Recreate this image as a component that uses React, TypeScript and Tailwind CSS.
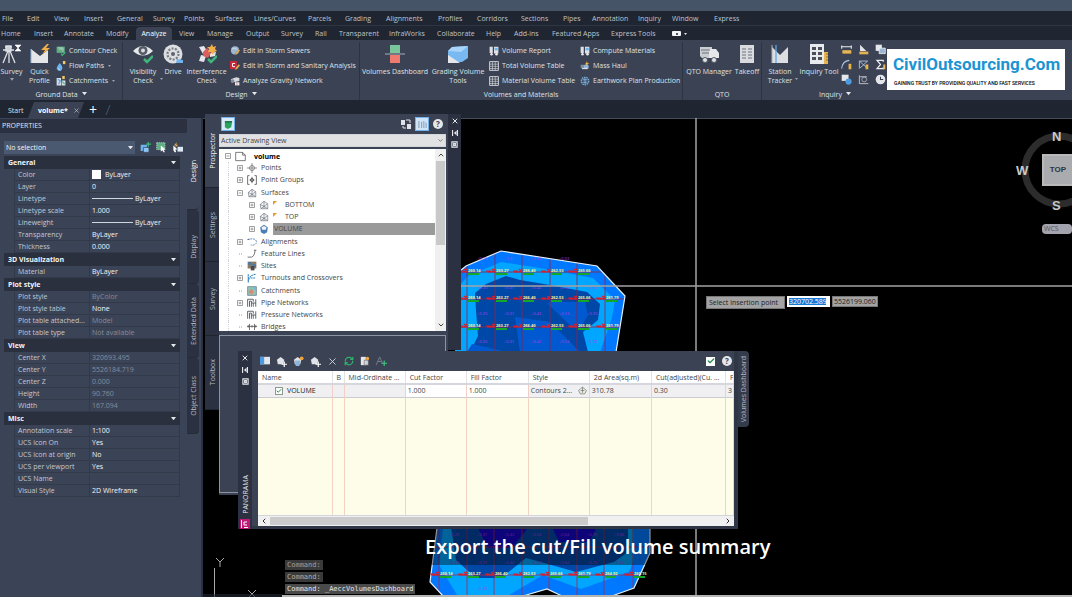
import React, { useState } from 'react';
import { Check, ChevronDown, ChevronUp, ChevronLeft, ChevronRight, X, RefreshCw } from 'lucide-react';

const menus = [
  { label: 'File', w: 'w-[25px]' },
  { label: 'Edit', w: 'w-[27px]' },
  { label: 'View', w: 'w-[30px]' },
  { label: 'Insert', w: 'w-[33px]' },
  { label: 'General', w: 'w-9' },
  { label: 'Survey', w: 'w-[31px]' },
  { label: 'Points', w: 'w-[31px]' },
  { label: 'Surfaces', w: 'w-[39px]' },
  { label: 'Lines/Curves', w: 'w-[54px]' },
  { label: 'Parcels', w: 'w-[37px]' },
  { label: 'Grading', w: 'w-[41px]' },
  { label: 'Alignments', w: 'w-[52px]' },
  { label: 'Profiles', w: 'w-[39px]' },
  { label: 'Corridors', w: 'w-11' },
  { label: 'Sections', w: 'w-[42px]' },
  { label: 'Pipes', w: 'w-[29px]' },
  { label: 'Annotation', w: 'w-[46px]' },
  { label: 'Inquiry', w: 'w-[34px]' },
  { label: 'Window', w: 'w-[42px]' },
  { label: 'Express', w: 'w-10' },
];

const ribbonTabs = [
  { label: 'Home', w: 'w-[33px]' },
  { label: 'Insert', w: 'w-[30px]' },
  { label: 'Annotate', w: 'w-[42px]' },
  { label: 'Modify', w: 'w-[30px]' },
  { label: 'Analyze', w: 'w-9' },
  { label: 'View', w: 'w-[35px]' },
  { label: 'Manage', w: 'w-[39px]' },
  { label: 'Output', w: 'w-[35px]' },
  { label: 'Survey', w: 'w-[34px]' },
  { label: 'Rail', w: 'w-6' },
  { label: 'Transparent', w: 'w-[50px]' },
  { label: 'InfraWorks', w: 'w-12' },
  { label: 'Collaborate', w: 'w-[49px]' },
  { label: 'Help', w: 'w-7' },
  { label: 'Add-ins', w: 'w-[38px]' },
  { label: 'Featured Apps', w: 'w-[59px]' },
  { label: 'Express Tools', w: 'w-[61px]' },
];

type Prop = { name: string; value: string; dim?: boolean; kind?: 'color' | 'line' };

const sections: { title: string; rows: Prop[] }[] = [
  {
    title: 'General',
    rows: [
      { name: 'Color', value: 'ByLayer', kind: 'color' },
      { name: 'Layer', value: '0' },
      { name: 'Linetype', value: 'ByLayer', kind: 'line' },
      { name: 'Linetype scale', value: '1.000' },
      { name: 'Lineweight', value: 'ByLayer', kind: 'line' },
      { name: 'Transparency', value: 'ByLayer' },
      { name: 'Thickness', value: '0.000' },
    ],
  },
  { title: '3D Visualization', rows: [{ name: 'Material', value: 'ByLayer' }] },
  {
    title: 'Plot style',
    rows: [
      { name: 'Plot style', value: 'ByColor', dim: true },
      { name: 'Plot style table', value: 'None' },
      { name: 'Plot table attached...', value: 'Model', dim: true },
      { name: 'Plot table type', value: 'Not available', dim: true },
    ],
  },
  {
    title: 'View',
    rows: [
      { name: 'Center X', value: '320693.495', dim: true },
      { name: 'Center Y', value: '5526184.719', dim: true },
      { name: 'Center Z', value: '0.000', dim: true },
      { name: 'Height', value: '90.760', dim: true },
      { name: 'Width', value: '167.094', dim: true },
    ],
  },
  {
    title: 'Misc',
    rows: [
      { name: 'Annotation scale', value: '1:100' },
      { name: 'UCS icon On', value: 'Yes' },
      { name: 'UCS icon at origin', value: 'No' },
      { name: 'UCS per viewport', value: 'Yes' },
      { name: 'UCS Name', value: '' },
      { name: 'Visual Style', value: '2D Wireframe' },
    ],
  },
];

// Small filled triangle used by every drop-down
const Caret = ({ className = 'w-[5px] text-gray-200' }) => (
  <svg viewBox="0 0 6 4" className={className} fill="currentColor"><path d="M0 0h6L3 4z" /></svg>
);

const Pencil = () => <path d="M9 11l5-6 2 2-5 6-3 1z" fill="#e5b45c" stroke="#7a5a2c" strokeWidth=".5" />;

// Large ribbon icons, 20x20 grid
const Big = {
  survey: (
    <g fill="none" stroke="#dfe2e6" strokeWidth="1.3">
      <path d="M3 3h7M1 6h11M6 7L1 19M7 7v12M8 7l5 12" /><path d="M4 2h5v5H4z" fill="#cfd3d8" />
      <path d="M13 1h6l-6 6h6z" fill="#fff" stroke="#fff" strokeWidth=".6" />
    </g>
  ),
  profile: (
    <g><path d="M1 5l9 7 8-6v13H1z" fill="#e4e6ea" /><path d="M1 5v14" stroke="#8fb4dc" strokeWidth="1" /><path d="M17 0l-6 6h4l-3 5 8-7h-4l3-4z" fill="#f2b04a" /></g>
  ),
  eye: (
    <g><path d="M0 7Q10-3 20 7 10 16 0 7z" fill="#e7e8ea" /><circle cx="10" cy="6.500" r="4.500" fill="#555b66" /><circle cx="10" cy="6.500" r="2" fill="#d9dbde" /><path d="M11 15l3 3 6-6" fill="none" stroke="#3fb57b" strokeWidth="2.500" /></g>
  ),
  drive: (
    <g><circle cx="10" cy="10" r="9.500" fill="#dcdee1" /><circle cx="10" cy="10" r="5.500" fill="none" stroke="#767b84" strokeWidth="2.200" strokeDasharray="2 1.400" /><circle cx="10" cy="10" r="2" fill="#5e636d" /><path d="M14 15l6 1v3h-7z" fill="#6fb2ee" /></g>
  ),
  interference: (
    <g><path d="M2 3l5-1 3 5-4 3zM2 17l2-6 5 1-2 6zM13 9l6-1-1 4-5 1z" fill="#e6e7ea" /><path d="M6 8l4-4 4 5-3 5-5-2z" fill="#d9605c" /><path d="M15 0l1 3 3-1-1 3 2 2-3 1-1 3-2-3-3 0 1-3-2-2 3 0z" fill="#f2b04a" /><path d="M11 15l3 3 6-6" fill="none" stroke="#3fb57b" strokeWidth="2.500" /></g>
  ),
  dashboard: (
    <g><path d="M5 1h10v8H5z" fill="#79c79b" /><path d="M5 11h10v8H5z" fill="#ee7a70" /><path d="M0 10h20" stroke="#a9adb5" strokeWidth="1" /></g>
  ),
  grading: (
    <g><path d="M0 7l4-4 16-1v12l-6 4H0z" fill="#78b9f2" /><path d="M0 7l13 1 7-6L4 3z" fill="#a8d4fa" /><path d="M0 11v8h12z" fill="#e4e6ea" /></g>
  ),
  truck: (
    <g><path d="M1 3h12v11H3L1 12z" fill="#c9ccd1" /><path d="M10 5h7l3 4v5H10z" fill="#e6e7ea" /><path d="M2 6h9M3 9h7" stroke="#6c727d" strokeWidth="1" /><circle cx="6" cy="16" r="2.500" fill="#e3e5e8" stroke="#555b66" /><circle cx="15" cy="16" r="2.500" fill="#e3e5e8" stroke="#555b66" /></g>
  ),
  takeoff: (
    <g><path d="M3 1h14v18H3z" fill="#d9dbde" /><path d="M5 5h4M11 5h4M5 8h4M11 8h4M5 11h4M11 11h4M5 14h4M11 14h4" stroke="#6d737e" strokeWidth="1" /></g>
  ),
  station: (
    <g><path d="M2 3l8 8 8-8v16H2z" fill="#dcdee2" /><path d="M6 1v18" stroke="#5da7e8" strokeWidth="1.300" /><path d="M2 1v18" stroke="#aab0ba" /></g>
  ),
  inquiry: (
    <g><path d="M1 0h14v20H1z" fill="#e9eaec" /><path d="M3 3h4v3H3zM9 3h4v3H9zM3 8h4v3H3zM9 8h4v3H9zM3 13h4v3H3zM9 13h4v3H9z" fill="#4a505c" /><path d="M15 8h4v12h-4z" fill="#e6b450" /><path d="M17 10h2M17 13h2M17 16h2" stroke="#7a5a2c" strokeWidth=".8" /></g>
  ),
};

// Small ribbon icons, 16x16 grid
const Small = {
  contour: <g><path d="M1 1h13v10H1z" fill="#5fae84" /><path d="M3 3h8v6M5 5h5" stroke="#cfe8da" fill="none" /><path d="M8 12l2 3 5-5" stroke="#3fb57b" strokeWidth="2" fill="none" /></g>,
  flow: <g><path d="M6 3q5 6 4 9-1 4-4 4t-5-4q0-3 5-9z" fill="#6ab4ef" /><path d="M4 12q0 2 2 2" stroke="#fff" fill="none" /><path d="M11 0h4v5h-4z" fill="#f2c661" /></g>,
  catch: <g><path d="M1 3h7v12H1zM9 7h6v8H9z" fill="#d9dce0" /><path d="M3 5l4 3-3 5" stroke="#5da7e8" strokeWidth="2" fill="none" /><path d="M10 0h4v5h-4z" fill="#f2c661" /><path d="M10 9l4 4" stroke="#5fae84" strokeWidth="2" /></g>,
  storm: <g><circle cx="8" cy="7" r="6.500" fill="#9db6d2" /><path d="M3 5q5-4 9 1" stroke="#e7f0fa" fill="none" /><Pencil /></g>,
  sanitary: <g><path d="M0 0h11v13H0z" fill="#c9283b" /><path d="M8 4H4v5h4" stroke="#fff" strokeWidth="1.500" fill="none" /><Pencil /></g>,
  gravity: <g><path d="M1 5l9-3 5 1v5L6 10z" fill="#d7dadf" /><circle cx="4" cy="8" r="3" fill="#878d98" /><path d="M8 10h7v5H8z" fill="#eceef0" /><path d="M11 10v5" stroke="#d9605c" /></g>,
  report: <g><path d="M1 1h5v10H1zM8 1h7v11H8z" fill="#dfe1e5" /><path d="M9 3h5v4H9z" fill="#6ab4ef" /><circle cx="4" cy="13" r="2" fill="#eee" /><circle cx="12" cy="13" r="2" fill="#eee" /></g>,
  table: <g><path d="M1 1h14v14H1z" fill="#3a404c" stroke="#e4e6ea" strokeWidth="1.400" /><path d="M1 5h14M1 8.500h14M1 12h14M5.500 1v14M10 1v14" stroke="#d9dce0" strokeWidth="1" /></g>,
  mass: <g><path d="M1 6h6v5H1z" fill="#7d8da3" /><circle cx="10" cy="9" r="4" fill="#8cb6dc" /><path d="M11 0l1 3 3 1-3 1-1 3-1-3-2-1 2-1z" fill="#f2b04a" /><path d="M3 12h9" stroke="#dfe1e5" strokeWidth="2" /></g>,
  earth: <g><circle cx="8" cy="8" r="6" fill="#35506e" stroke="#79aede" strokeWidth="2" strokeDasharray="2.500 1.200" /><path d="M4 6h8M4 10h8M8 3v10" stroke="#b6d3ee" /></g>,
  ruler: <g><path d="M1 2v5M15 2v5M1 4h14" stroke="#eee" strokeWidth="1.500" /><path d="M2 9h13v5H2z" fill="#e6b450" /></g>,
  area: <g><path d="M3 1l9 9H3z" fill="#e4e6ea" /><path d="M2 11h13v4H2z" fill="#e6b450" /></g>,
  layers: <g><path d="M1 1h9v9H1z" fill="#e4e6ea" /><path d="M6 6h9v8H6z" fill="#9db6d2" stroke="#fff" /></g>,
  curve: <g><path d="M1 14Q2 3 12 2" stroke="#a9c9ea" strokeWidth="1.500" fill="none" /><path d="M11 7h4v8h-4z" fill="#e6b450" /></g>,
  net: <g><path d="M2 14V3l10 9M2 3h12L3 13" stroke="#b9d0e8" strokeWidth="1.200" fill="none" /><path d="M11 8h4v7h-4z" fill="#e6b450" /></g>,
  sum: <g><path d="M12 4V2H3l5 6-5 6h9v-2" stroke="#eee" strokeWidth="1.800" fill="none" /><path d="M12 8h3v7h-3z" fill="#e6b450" /></g>,
  select: <g><path d="M1 1h10v9H1z" fill="#e4e6ea" /><circle cx="11" cy="11" r="4.500" fill="#4f9be0" /></g>,
  zoom: <g><path d="M2 2v12h13M3 4h10" stroke="#c7cbd1" strokeWidth="1.300" fill="none" /><circle cx="9" cy="8" r="3.500" stroke="#c7cbd1" fill="none" /></g>,
  clock: <g><circle cx="8" cy="8" r="7" fill="#e4e6ea" /><path d="M8 4v4h4" stroke="#3b4252" strokeWidth="1.500" fill="none" /></g>,
};

const BigButton = ({ icon, lines, w, drop = false }: { icon: keyof typeof Big; lines: string[]; w: string; drop?: boolean }) => (
  <button className={`relative flex shrink-0 flex-col items-center whitespace-nowrap ${w}`}>
    <svg viewBox="0 0 20 20" className="mb-[3px] size-5">{Big[icon]}</svg>
    {lines.map((line) => <span key={line} className="leading-[9px]">{line}</span>)}
    {drop && lines.length === 1 && <Caret className="mt-[2px] w-1 text-gray-400" />}
    {drop && lines.length === 2 && <Caret className="absolute bottom-[5px] right-0 w-[3px] text-gray-400" />}
  </button>
);

const SmallButton = ({ icon, label, drop = false }: { icon: keyof typeof Small; label: string; drop?: boolean }) => (
  <button className="flex h-[15px] items-center gap-[3px] whitespace-nowrap">
    <svg viewBox="0 0 16 16" className="size-[10px]">{Small[icon]}</svg>
    {label}
    {drop && <Caret className="ml-px w-[3px] text-gray-400" />}
  </button>
);

const Group = ({ title, w, drop = false, children }: { title: string; w: string; drop?: boolean; children: React.ReactNode }) => (
  <section className={`flex shrink-0 flex-col border-r border-[#2c3341] last-of-type:border-r-0 ${w}`}>
    <div className="flex h-[46px] items-start pt-[2px]">{children}</div>
    <div className="flex h-3 items-center justify-center gap-1">{title}{drop && <Caret />}</div>
  </section>
);

const Ribbon = () => (
  <div className="relative flex h-[60px] shrink-0 bg-[#3b4254] pt-[2px]">
    <Group title="Ground Data" w="w-[123px]" drop>
      <BigButton icon="survey" lines={['Survey']} w="w-[23px]" drop />
      <BigButton icon="profile" lines={['Quick', 'Profile']} w="w-[33px]" />
      <div className="-mt-px">
        <SmallButton icon="contour" label="Contour Check" />
        <SmallButton icon="flow" label="Flow Paths" drop />
        <SmallButton icon="catch" label="Catchments" drop />
      </div>
    </Group>
    <Group title="Design" w="w-[237px]" drop>
      <BigButton icon="eye" lines={['Visibility', 'Check']} w="w-[40px]" drop />
      <BigButton icon="drive" lines={['Drive']} w="w-5" />
      <BigButton icon="interference" lines={['Interference', 'Check']} w="w-[47px]" />
      <div className="-mt-px">
        <SmallButton icon="storm" label="Edit in Storm Sewers" />
        <SmallButton icon="sanitary" label="Edit in Storm and Sanitary Analysis" />
        <SmallButton icon="gravity" label="Analyze Gravity Network" />
      </div>
    </Group>
    <Group title="Volumes and Materials" w="w-[323px]">
      <BigButton icon="dashboard" lines={['Volumes Dashboard']} w="w-[70px]" />
      <BigButton icon="grading" lines={['Grading Volume', 'Tools']} w="w-[56px]" />
      <div className="-mt-px ml-[3px] w-[91px]">
        <SmallButton icon="report" label="Volume Report" />
        <SmallButton icon="table" label="Total Volume Table" />
        <SmallButton icon="table" label="Material Volume Table" />
      </div>
      <div className="-mt-px">
        <SmallButton icon="report" label="Compute Materials" />
        <SmallButton icon="mass" label="Mass Haul" />
        <SmallButton icon="earth" label="Earthwork Plan Production" />
      </div>
    </Group>
    <Group title="QTO" w="w-[79px]">
      <BigButton icon="truck" lines={['QTO Manager']} w="w-[52px]" />
      <BigButton icon="takeoff" lines={['Takeoff']} w="w-6" />
    </Group>
    <Group title="Inquiry" w="w-[146px]" drop>
      <BigButton icon="station" lines={['Station', 'Tracker']} w="w-[36px]" drop />
      <BigButton icon="inquiry" lines={['Inquiry Tool']} w="w-[42px]" />
      <div className="grid grid-cols-3 gap-x-[6px] gap-y-1 pl-px">
        {(['ruler', 'area', 'layers', 'curve', 'net', 'sum', 'select', 'zoom', 'clock'] as const).map((name) => (
          <button key={name} aria-label={name}><svg viewBox="0 0 16 16" className="size-[11px]">{Small[name]}</svg></button>
        ))}
      </div>
    </Group>
    <div className="absolute right-[7px] top-[9px] flex h-[41px] w-[178px] flex-col bg-white pl-[6px] font-['Roboto','Liberation_Sans',sans-serif] whitespace-nowrap">
      <span className="text-[17px] leading-[30px] font-bold text-[#1c94d2]">CivilOutsourcing.Com</span>
      <span className="pl-px text-[5px] leading-[9px] font-medium text-black">GAINING TRUST BY PROVIDING QUALITY AND FAST SERVICES</span>
    </div>
  </div>
);

const Properties = () => (
  <aside className="flex w-[203px] shrink-0 border-r-2 border-[#2b3140] bg-[#3b4356]">
    <div className="flex w-[187px] flex-col">
      <h2 className="mt-px h-[14px] bg-[#2b3140] pl-[2px] leading-[14px] text-gray-200">PROPERTIES</h2>
      <div className="mt-2 mb-px flex items-center gap-[5px] pb-px pl-1">
        <label className="relative w-[131px]">
          <select aria-label="Selection" className="h-[13px] w-full appearance-none bg-[#4b5970] pl-[2px] text-gray-100">
            <option>No selection</option>
          </select>
          <Caret className="absolute right-[2px] top-[5px] w-[5px] text-gray-200" />
        </label>
        <button aria-label="Toggle pickadd"><svg viewBox="0 0 16 16" className="size-[11px]"><path d="M1 4h9v9H1z" fill="#6ab4ef" /><path d="M5 8h8v7H5z" fill="#8cc5f5" stroke="#3b4356" /><path d="M12 0v7M9 3h7" stroke="#3fb57b" strokeWidth="2" /></svg></button>
        <button aria-label="Select objects"><svg viewBox="0 0 16 16" className="size-[11px]"><path d="M1 1h12v10H1z" fill="#5fae84" strokeDasharray="2 1" stroke="#bfe3cf" /><path d="M7 5l7 6-3 0 2 4-2 0-2-3-2 2z" fill="#fff" /></svg></button>
        <button aria-label="Quick select"><svg viewBox="0 0 16 16" className="size-[11px]"><path d="M2 5l6 6-3 0 1 4-2 0-2-3z" fill="#fff" /><path d="M7 0L3 5h3l-2 4 5-5H6z" fill="#f2b04a" /><path d="M8 7h8v7H8z" fill="#dbe9f7" /></svg></button>
      </div>
      {sections.map((section) => (
        <div key={section.title} className="mr-[7px] pl-1">
          <div className="flex h-[13px] items-center justify-between bg-[#2a303e] px-1 font-bold text-gray-100">
            {section.title}
            <Caret />
          </div>
          <dl className="ml-[10px] border-l border-[#323949]">
            {section.rows.map((row) => (
              <div key={row.name} className="flex h-3 items-center border-b border-r border-[#323949]">
                <dt className="h-full w-[75px] shrink-0 border-r border-[#323949] pl-[3px] leading-[11px] text-[#c3c9d3]">{row.name}</dt>
                <dd className={`flex items-center pl-[2px] leading-[11px] ${row.dim ? 'text-[#858d9c]' : 'text-gray-100'}`}>
                  {row.kind === 'color' && <span className="mr-1 size-[9px] bg-white" />}
                  {row.kind === 'line' && <span className="mr-[2px] h-px w-[41px] bg-gray-300" />}
                  {row.value}
                </dd>
              </div>
            ))}
          </dl>
        </div>
      ))}
    </div>
    <div className="mt-4 flex w-3 flex-col text-[#b4bac5]">
      {[
        { label: 'Design', cls: 'h-[76px] bg-[#3b4356] text-gray-100' },
        { label: 'Display', cls: 'h-[74px] bg-[#2b3140]' },
        { label: 'Extended Data', cls: 'h-[74px] bg-[#2b3140]' },
        { label: 'Object Class', cls: 'h-[76px] bg-[#2b3140]' },
      ].map((tab) => (
        <button key={tab.label} className={`flex items-center justify-center whitespace-nowrap rounded-r-sm border-b border-[#252b37] ${tab.cls}`}>
          <span className="rotate-180 leading-[9px] [writing-mode:vertical-rl]">{tab.label}</span>
        </button>
      ))}
    </div>
  </aside>
);

// Tree icons, 16x16 grid
const surfaceIcon = <path d="M2 7l6-5 6 4v8H3zM2 7l6 3 6-4M8 10v4M8 2v8M3 14l5-4 6 4" fill="#eef0f2" stroke="#5d646f" strokeWidth=".9" />;
const pipeIcon = <path d="M1 14V2h9v4M4 14V5h3v9M10 14V8M14 2v12M7 8h7" fill="none" stroke="#4d535d" strokeWidth="1.400" />;
const TreeIcon: Record<string, React.ReactNode> = {
  doc: <path d="M1 2h10l4 4v8H1zM11 2v4h4" fill="#fff" stroke="#444" />,
  points: <g fill="none" stroke="#555"><circle cx="8" cy="8" r="4" /><path d="M8 0v16M0 8h16" /></g>,
  groups: <g fill="none" stroke="#444" strokeWidth="1.200"><path d="M4 1H1v14h3M12 1h3v14h-3M8 3v10M4 8h8" /><circle cx="8" cy="8" r="2.500" /></g>,
  surface: surfaceIcon,
  volume: <g><path d="M2 5l6-4 6 4-1 8-5 3-5-3z" fill="#4b7fb5" /><path d="M4 5l4-2 4 2-1 4H5z" fill="#eef3f8" /></g>,
  align: <path d="M1 4l4-1 5 0q5 1 5 5t-5 5H6M1 4h3" fill="none" stroke="#3d6e9e" strokeWidth="1.300" strokeDasharray="3 1.500" />,
  feature: <path d="M1 13h6q5-1 6-11M11 2h4" fill="none" stroke="#555" strokeWidth="1.300" />,
  sites: <g><path d="M1 1h14v11H1z" fill="#8a7a5f" /><path d="M2 2h5v4H2zM9 5h5v4H9z" fill="#3f78b8" /><path d="M6 8h6v7H6z" fill="#4a4a4a" /></g>,
  turnout: <path d="M2 15Q2 4 14 2M2 2v13M6 8l7 0" fill="none" stroke="#2f83c4" strokeWidth="1.800" strokeDasharray="3 1" />,
  catchments: <g><path d="M1 1h14v14H1z" fill="#8fc5b8" stroke="#567" /><path d="M2 10l5-6 4 5-3 5z" fill="#d98a72" /><path d="M9 2h5v5z" fill="#6ab4ef" /></g>,
  pipe: pipeIcon,
  bridge: <path d="M0 7h16M4 3v10M12 3v10M2 5v4M14 5v4M8 5v4" fill="none" stroke="#555" strokeWidth="1.300" />,
};

const tree = [
  { label: 'Points', icon: 'points', level: 1, box: '+' },
  { label: 'Point Groups', icon: 'groups', level: 1, box: '+' },
  { label: 'Surfaces', icon: 'surface', level: 1, box: '-' },
  { label: 'BOTTOM', icon: 'surface', level: 2, box: '+', flag: true },
  { label: 'TOP', icon: 'surface', level: 2, box: '+', flag: true },
  { label: 'VOLUME', icon: 'volume', level: 2, box: '+', active: true },
  { label: 'Alignments', icon: 'align', level: 1, box: '+' },
  { label: 'Feature Lines', icon: 'feature', level: 1 },
  { label: 'Sites', icon: 'sites', level: 1 },
  { label: 'Turnouts and Crossovers', icon: 'turnout', level: 1, box: '+' },
  { label: 'Catchments', icon: 'catchments', level: 1 },
  { label: 'Pipe Networks', icon: 'pipe', level: 1, box: '+' },
  { label: 'Pressure Networks', icon: 'pipe', level: 1 },
  { label: 'Bridges', icon: 'bridge', level: 1 },
];

const Expander = ({ box }: { box?: string }) => (
  <svg viewBox="0 0 6 6" className="size-[6px] shrink-0" fill="none" stroke="#888" strokeWidth=".8">
    {box ? <><path d="M.5 .5h5v5h-5zM1.500 3h3" />{box === '+' && <path d="M3 1.500v3" />}</> : <path d="M2 3h4" strokeDasharray="1 1" />}
  </svg>
);

const PaletteControls = () => (
  <>
    <button aria-label="Close"><X className="size-2" strokeWidth={3} /></button>
    <button aria-label="Auto-hide"><svg viewBox="0 0 8 8" className="size-[6px]" fill="currentColor"><path d="M0 0h1.500v8H0zM6.500 0H8v8H6.500zM6 1v6L2.500 4z" /></svg></button>
    <button aria-label="Settings"><svg viewBox="0 0 8 8" className="size-[7px]"><path d="M1 1h6v6H1zM3 3h2v2H3z" fill="none" stroke="currentColor" strokeWidth="1.300" /></svg></button>
  </>
);

const HelpButton = () => (
  <button aria-label="Help" className="flex size-[10px] items-center justify-center rounded-full bg-gray-200 text-[8px] leading-none font-bold text-[#3b4254]">?</button>
);

const Toolspace = () => {
  const [tab, setTab] = useState('Prospector');
  return (
    <section className="absolute -top-1 left-[2px] flex h-[381px] w-[256px] text-[#444]">
      <div className="flex w-[14px] flex-col text-[#b4bac5]">
        {['Prospector', 'Settings', 'Survey', 'Toolbox'].map((name) => (
          <button key={name} onClick={() => setTab(name)} className={`flex h-[74px] items-center justify-center border-b border-[#1f2530] ${tab === name ? 'bg-[#3b4254] text-gray-100' : 'bg-[#2b3140]'}`}>
            <span className="rotate-180 leading-[9px] [writing-mode:vertical-rl]">{name}</span>
          </button>
        ))}
      </div>
      <div className="flex w-[229px] flex-col bg-[#3b4254] pr-[2px]">
        <div className="flex h-[20px] items-center gap-1 pl-[2px] pr-[3px]">
          <button aria-label="Active drawing" className="mr-auto flex size-[14px] items-center justify-center border border-[#6fb2ee] bg-[#d9ebfa]">
            <svg viewBox="0 0 10 10" className="size-[9px]"><path d="M1 2h8l-1 6-4 2-3-2z" fill="#2ba35f" /><path d="M1 2h8" stroke="#136b3a" strokeWidth="1.500" /></svg>
          </button>
          <button aria-label="Item preview"><svg viewBox="0 0 10 10" className="size-[10px]"><path d="M0 1h4v5H0zM6 5h4v5H6z" fill="#dfe2e6" /><path d="M5 1h4v3M2 7v2h3" stroke="#dfe2e6" fill="none" /></svg></button>
          <button aria-label="Panorama" className="flex size-[14px] items-center justify-center border border-[#6fb2ee] bg-[#cfe4f7]">
            <svg viewBox="0 0 10 10" className="size-[9px]"><path d="M1 1v8M4 2v7M6.500 1v8M9 3v6" stroke="#8fa2b6" strokeWidth="1.200" /></svg>
          </button>
          <HelpButton />
        </div>
        <label className="relative">
          <select aria-label="View" className="block h-[13px] w-full appearance-none border border-gray-300 bg-[#e1e1e3] pl-px text-[#444]">
            <option>Active Drawing View</option>
          </select>
          <ChevronDown className="absolute right-[2px] top-[3px] size-[7px]" />
        </label>
        <div className="mt-[2px] flex h-[182px] shrink-0 overflow-hidden bg-white">
          <ul className="min-w-0 flex-1 pl-[6px] pt-px">
            <li className="flex h-3 items-center gap-1 font-bold text-black">
              <Expander box="-" />
              <svg viewBox="0 0 16 16" className="mr-1 size-[11px]">{TreeIcon.doc}</svg>
              volume
            </li>
            {tree.map((node) => (
              <li key={node.label} className="ml-[3px] flex h-3 items-center border-l border-dotted border-gray-300 nth-[4n]:mt-px">
                <div className={`flex w-full items-center ${node.level === 1 ? 'pl-[8px]' : 'pl-[20px]'}`}>
                  <Expander box={node.box} />
                  <svg viewBox="0 0 16 16" className="mx-1 size-[10px] shrink-0">{TreeIcon[node.icon]}</svg>
                  {node.flag && <svg viewBox="0 0 4 4" className="mb-1 mr-2 size-1"><path d="M0 0h4L0 4z" fill="#e89a2c" /></svg>}
                  <span className={`whitespace-nowrap leading-[12px] ${node.active ? 'flex-1 bg-[#9a9a9a] pl-px' : ''}`}>{node.label}</span>
                </div>
              </li>
            ))}
          </ul>
          <div className="flex w-[11px] flex-col items-center bg-[#f0f0f0] py-[2px]">
            <ChevronUp className="size-2" strokeWidth={3} />
            <div className="mt-[2px] h-[84px] w-[9px] bg-[#c9c9c9]" />
            <ChevronDown className="mt-auto size-2" strokeWidth={3} />
          </div>
        </div>
        <div className="mb-[2px] mt-1 flex-1 border border-[#8b94a3] bg-[#3b4254]" />
      </div>
      <div className="flex h-[236px] flex-1 flex-col items-center gap-[5px] bg-[#2b3140] pt-[3px] text-gray-200">
        <PaletteControls />
      </div>
    </section>
  );
};

const columns = [
  { label: 'Name', w: 'w-[74px]' },
  { label: 'B', w: 'w-3' },
  { label: 'Mid-Ordinate ...', w: 'w-[61px]' },
  { label: 'Cut Factor', w: 'w-[61px]' },
  { label: 'Fill Factor', w: 'w-[62px]' },
  { label: 'Style', w: 'w-[61px]' },
  { label: '2d Area(sq.m)', w: 'w-[62px]' },
  { label: 'Cut(adjusted)(Cu. ...', w: 'w-[74px]' },
  { label: 'F', w: 'w-2' },
];

const SurfaceTool = ({ color = '#dfe2e6', plus = false, spark = false }) => (
  <svg viewBox="0 0 12 12" className="size-[11px]">
    <path d="M1 4l4-3 4 3-1 5H2z" fill={color} />
    {spark && <><path d="M2 5h6l-1 6H3z" fill="#8cb6dc" /><circle cx="9.500" cy="2.500" r="2" fill="#f2a53a" /></>}
    {plus && <path d="M9 6v6M6 9h6" stroke="#fff" strokeWidth="1.300" />}
  </svg>
);

const Panorama = () => {
  const [checked, setChecked] = useState(true);
  return (
    <section className="absolute left-[35px] top-[233px] flex items-start">
      <div className="flex w-[14px] flex-col items-center gap-[5px] self-stretch bg-[#2b3140] pt-[3px] text-gray-200">
        <PaletteControls />
        <span className="mt-auto rotate-180 leading-[9px] [writing-mode:vertical-rl]">PANORAMA</span>
        <svg viewBox="0 0 10 10" className="size-[10px]"><path d="M0 0h10v10H0z" fill="#c2187a" /><path d="M7 3H4v3h3M4 8.500h4M1.500 1v8" stroke="#fff" fill="none" /></svg>
      </div>
      <div className="flex h-[178px] w-[486px] flex-col border-b-[3px] border-r-[4px] border-[#2f3646] bg-[#3b4254] pl-[6px]">
        <div className="flex h-5 items-center gap-[6px] px-[2px]">
          <button aria-label="Toggle view"><svg viewBox="0 0 12 12" className="size-[10px]"><path d="M0 1h12v9H0z" fill="#e4e6ea" /><path d="M0 1h5v9H0z" fill="#4f9be0" /></svg></button>
          <button aria-label="Create surface"><SurfaceTool plus /></button>
          <button aria-label="Create volume surface"><SurfaceTool spark /></button>
          <button aria-label="Add surface"><SurfaceTool plus /></button>
          <button aria-label="Remove"><X className="size-[11px] text-gray-300" /></button>
          <button aria-label="Recompute"><RefreshCw className="size-[10px] text-[#2fb36d]" strokeWidth={3} /></button>
          <button aria-label="Cut fill summary"><svg viewBox="0 0 12 12" className="size-[10px]"><path d="M1 1h6v10H1z" fill="#e4e6ea" /><path d="M5 5h5v6H5z" fill="#cfd3d8" stroke="#555" strokeWidth=".6" /><circle cx="9" cy="3" r="2" fill="#f2a53a" /></svg></button>
          <button aria-label="Bounded volume"><svg viewBox="0 0 12 12" className="size-[11px]"><path d="M0 10L4 1l3 7M2 6h4" fill="none" stroke="#76808e" /><path d="M9 5v6M6 8h6" stroke="#3fb57b" strokeWidth="1.500" /></svg></button>
          <button aria-label="Apply" className="ml-auto mr-px flex size-[9px] items-center justify-center bg-white"><Check className="size-2 text-[#2a8f55]" strokeWidth={4} /></button>
          <HelpButton />
        </div>
        <div className="flex flex-1 flex-col bg-[#fefde9]">
          <table className="h-[144px] w-full table-fixed border-collapse text-left text-[#444]">
            <thead>
              <tr className="h-[13px] border-b-2 border-[#d5d7dc] bg-white">
                {columns.map((col) => (
                  <th key={col.label} className={`overflow-hidden whitespace-nowrap border-r border-[#e3e3e3] pl-1 font-normal leading-[11px] ${col.w}`}>{col.label}</th>
                ))}
              </tr>
            </thead>
            <tbody>
              <tr className="h-[13px] border-b border-[#c9cbd0] bg-[#f0f0f2] [&>td]:overflow-hidden [&>td]:whitespace-nowrap [&>td]:border-r [&>td]:border-[#f0cfc6] [&>td]:pl-[2px] [&>td]:leading-[11px]">
                <td>
                  <label className="flex items-center gap-1 pl-[15px] text-[#222]">
                    <input type="checkbox" checked={checked} onChange={() => setChecked(!checked)} className="peer sr-only" />
                    <span className="flex size-2 items-center justify-center border border-[#8b9a8f] bg-white">{checked && <Check className="size-[6px] text-[#2a8f55]" strokeWidth={4} />}</span>
                    VOLUME
                  </label>
                </td>
                <td></td>
                <td></td>
                <td className="bg-white">1.000</td>
                <td className="bg-white">1.000</td>
                <td>
                  <span className="flex items-center justify-between pr-[2px]">
                    Contours 2...
                    <svg viewBox="0 0 16 16" className="size-[9px]"><path d="M1 8l7-6 7 6-3 6H4zM5 8h6M8 2v10" fill="#e6edd8" stroke="#556" /></svg>
                  </span>
                </td>
                <td>310.78</td>
                <td>0.30</td>
                <td>3</td>
              </tr>
              <tr className="h-full">
                {columns.map((col) => <td key={col.label} className="border-r border-[#f3d3c4]"></td>)}
              </tr>
            </tbody>
          </table>
          <div className="flex flex-1 items-center justify-between border-t border-gray-300 bg-[#f0f0f0] px-[2px] text-[#333]">
            <ChevronLeft className="size-2" strokeWidth={3} />
            <div className="ml-[2px] mr-auto h-[8px] w-[318px] bg-[#cbcbcb]" />
            <ChevronRight className="size-2" strokeWidth={3} />
          </div>
        </div>
      </div>
      <div className="flex h-[76px] w-[11px] items-center justify-center rounded-r-sm bg-[#343b4b] text-[#b4bac5]">
        <span className="rotate-180 whitespace-nowrap leading-[9px] [writing-mode:vertical-rl]">Volumes Dashboard</span>
      </div>
    </section>
  );
};

// Spot labels of the composite surface: red cut mark, yellow elevation, green base
const Spots = ({ xs, ys }: { xs: number[]; ys: number[] }) => (
  <>
    {ys.map((y) => xs.map((x, i) => (
      <g key={`${x}-${y}`} fontSize="4" fontWeight="bold">
        <path d={`M${x - 9} ${y - 1}h5M${x - 3} ${y - 3}l3 3M${x} ${y - 3}l-3 3M${x - 8} ${y}h8`} stroke="#d81f2d" strokeWidth="1.200" />
        <path d={`M${x + 1} ${y + 1}h11v2h-11z`} fill="#12a828" />
        <text x={x + 1} y={y} fill="#f4f3a0">26{(i * 3) % 7}.{(i * 13 + 4) % 90 + 10}</text>
      </g>
    )))}
  </>
);

const Tags = ({ xs, ys }: { xs: number[]; ys: number[] }) => (
  <g fontSize="4" fill="#b43cf5">
    {ys.map((y) => xs.map((x, i) => <text key={`${x}-${y}`} x={x} y={y}>+0.{(i * 11) % 70 + 20}</text>))}
  </g>
);

const topX = [467, 495, 522, 550, 577, 605];
const bottomX = [439, 467, 494, 522, 549, 577, 604, 633];

const Drawing = () => (
  <svg viewBox="203 118 869 479" className="absolute left-0 top-0 h-[479px] w-[869px]">
    <clipPath id="upper"><path d="M455 275l11-9 35-15 96 15 28 30-9 56H455z" /></clipPath>
    <clipPath id="lower"><path d="M438 520l-8 62 13 14h80l24-7 15 7h50l22-8 16-35v-33z" /></clipPath>
    <g clipPath="url(#upper)">
      <path d="M440 240h200v120H440z" fill="#0078ff" />
      <path d="M455 290l13-14 33-14 45 7 47 9 22 22-3 18-14 40H455z" fill="#00a6ff" />
      <path d="M475 293l11-9 20-8 14 4 30 5 37 7 13 12-2 16-15 12 5 20H470l8-16-2-25z" fill="#0048a8" />
      <path d="M515 317l35 5 30 30h-60zM549 302h20l16 0 3 13-8 14-8-2-24-23z" fill="#0059d0" />
      <path d="M472 344l35 8h-40z" fill="#0059d0" />
      <path d="M455 272h170M455 299h170M455 327h170M467 240v120M495 240v120M522 240v120M550 240v120M577 240v120M605 240v120" stroke="#97203f" strokeWidth=".8" />
    </g>
    <path d="M455 275l11-9 35-15 96 15 28 30-9 56" fill="none" stroke="#e8f2ff" strokeWidth="1.200" />
    <Spots xs={topX.slice(0, 5)} ys={[272]} />
    <Spots xs={topX} ys={[299, 327]} />
    <Tags xs={[477, 504, 531, 559]} ys={[260, 289, 315, 343]} />
    <Tags xs={[587]} ys={[289, 315, 343]} />
    <g clipPath="url(#lower)">
      <path d="M425 520h230v80H425z" fill="#0078ff" />
      <path d="M444 520h190v40l-5 12-48 17-38-14-34 20h-52l-18-30z" fill="#00a6ff" />
      <path d="M450 520h178v32l-14 10-38 10-28-8-22-6-20 16-6 4h-24l-20-18z" fill="#0048a8" />
      <path d="M474 520h60l-22 28h-24zM549 520h52l-12 22h-30z" fill="#1407c8" />
      <path d="M425 575h230M425 547h230M439 520v80M467 520v80M494 520v80M522 520v80M549 520v80M577 520v80M604 520v80M633 520v80" stroke="#a8264a" strokeWidth=".8" />
    </g>
    <path d="M438 520l-8 62 13 14h80l24-7 15 7h50l22-8 16-35v-33" fill="none" stroke="#e8f2ff" strokeWidth="1.200" />
    <Spots xs={bottomX} ys={[575]} />
    <Tags xs={[449, 477, 504, 531, 559, 587, 614]} ys={[536, 564]} />
    <Tags xs={[477]} ys={[590]} />
    <path d="M425 528h340v37H425z" fill="#000" opacity=".4" />
    {/* crosshair */}
    <path d="M696 118v477" stroke="#a3a3a3" strokeWidth="1.500" />
    <path d="M460 286h612" stroke="#a3a3a3" strokeWidth="1.500" />
    {/* UCS icon */}
    <path d="M214.500 568v29M216 558l4 4 4-4M220 562v5M248 590l7 7M256 590l-7 7" stroke="#a9a9a9" fill="none" />
    <path d="M203 594h80v3h-80z" fill="#222935" opacity=".6" />
    <path d="M282 595h790v2H282z" fill="#b5b5b5" />
  </svg>
);

const Canvas = () => (
  <main className="relative min-w-0 flex-1 bg-black">
    <div className="absolute inset-0 overflow-hidden">
      <Drawing />
      <div className="h-px bg-[#454b57]" />
      <div className="absolute -right-[43px] top-3 h-[80px] w-[94px] font-['Liberation_Sans',sans-serif] text-[13px] leading-none font-bold text-[#c9c9c9]">
        <svg viewBox="0 0 80 80" className="absolute -left-[2px] top-0 size-[80px]"><circle cx="40" cy="40" r="34" fill="none" stroke="#2c2c2c" strokeWidth="7" /></svg>
        <span className="absolute left-[31px] top-0">N</span>
        <span className="absolute -left-[5px] top-[34px]">W</span>
        <span className="absolute left-[31px] top-[69px]">S</span>
        <button className="absolute left-[21px] top-6 size-8 border-2 border-[#b9b9b9] bg-[#a9abae] text-[8px] text-[#2f3540]">TOP</button>
      </div>
      <button className="absolute right-0 top-[106px] h-[10px] w-[30px] rounded-sm bg-[#a3a3ad] pl-[2px] text-left leading-[10px] text-[#55555d]">WCS</button>
      <div className="absolute left-[503px] top-[178px] flex items-start gap-[2px]">
        <label htmlFor="px" className="h-[13px] border border-[#777] bg-[#a3a3a3] px-[2px] pr-[6px] leading-[11px] text-[#222]">Select insertion point</label>
        <input id="px" defaultValue="320702.589" className="h-[11px] w-[43px] border-2 border-r-[4px] border-white bg-[#1379d6] text-white" />
        <input aria-label="Y" defaultValue="5526199.060" className="h-[11px] w-[46px] border border-[#777] bg-[#a3a3a3] pl-px text-[#222]" />
      </div>
      <div className="absolute bottom-[3px] left-[82px] flex flex-col items-start gap-[2px] font-['DejaVu_Sans_Mono',monospace] leading-[10px]">
        <span className="bg-[#3a3a3a] px-[2px] text-[#a0a0a0]">Command:</span>
        <span className="bg-[#3a3a3a] px-[2px] text-[#b0b0b0]">Command:</span>
        <span className="bg-[#4a4a4a] px-[2px] text-gray-200">Command: _AeccVolumesDashboard</span>
      </div>
      <p className="absolute bottom-[36px] left-[222px] whitespace-nowrap font-['Open_Sans',sans-serif] text-[20px] leading-[28px] font-semibold text-white">Export the cut/Fill volume summary</p>
    </div>
    <Toolspace />
    <Panorama />
  </main>
);

export default function App() {
  const [active, setActive] = useState('Analyze');

  return (
    <div className="flex h-screen flex-col overflow-hidden bg-[#1f2632] font-['Open_Sans','Noto_Sans',sans-serif] text-[7px] leading-[9px] text-[#dfe2e6]">
      <div className="h-[11px] shrink-0 bg-[#465468]" />
      <nav className="flex h-[15px] shrink-0 items-center border-b border-[#2e3543] pl-[2px]">
        {menus.map((menu) => (
          <button key={menu.label} className={`shrink-0 whitespace-nowrap text-left text-[#bfc4cc] ${menu.w}`}>{menu.label}</button>
        ))}
      </nav>
      <div className="flex h-[14px] shrink-0 items-end pl-px">
        {ribbonTabs.map((tab) => (
          <button
            key={tab.label}
            onClick={() => setActive(tab.label)}
            className={`h-[13px] shrink-0 whitespace-nowrap ${tab.w} ${active === tab.label ? 'rounded-t-sm bg-[#3b4254] text-center text-white' : 'text-left text-[#bfc4cc]'} ${tab.label === 'View' ? 'pl-[7px]' : ''}`}
          >
            {tab.label}
          </button>
        ))}
        <button aria-label="Minimize ribbon" className="flex h-[13px] items-center gap-[3px]">
          <span className="flex h-[5px] w-[9px] items-center justify-center rounded-[1px] bg-gray-100"><span className="size-[2px] bg-gray-600" /></span>
          <Caret className="w-[3px] text-gray-200" />
        </button>
      </div>
      <Ribbon />
      <div className="flex h-[18px] shrink-0 items-end bg-[#1f2632]">
        <button className="h-4 w-7 pl-2 text-left">Start</button>
        <button className="flex h-4 w-[56px] items-center gap-[5px] bg-[#3b4254] pl-[10px] font-bold text-white [clip-path:polygon(6px_0,100%_0,50px_100%,0_100%)]">
          volume* <X className="size-[7px] text-gray-300" />
        </button>
        <button aria-label="New drawing" className="ml-[5px] h-4 text-[14px] leading-[14px] text-white">+</button>
        <svg viewBox="0 0 6 10" className="mb-[3px] ml-2 h-[10px] w-[6px]"><path d="M1 10L5 0" stroke="#4b5364" /></svg>
      </div>
      <div className="flex min-h-0 flex-1">
        <Properties />
        <Canvas />
      </div>
    </div>
  );
}
